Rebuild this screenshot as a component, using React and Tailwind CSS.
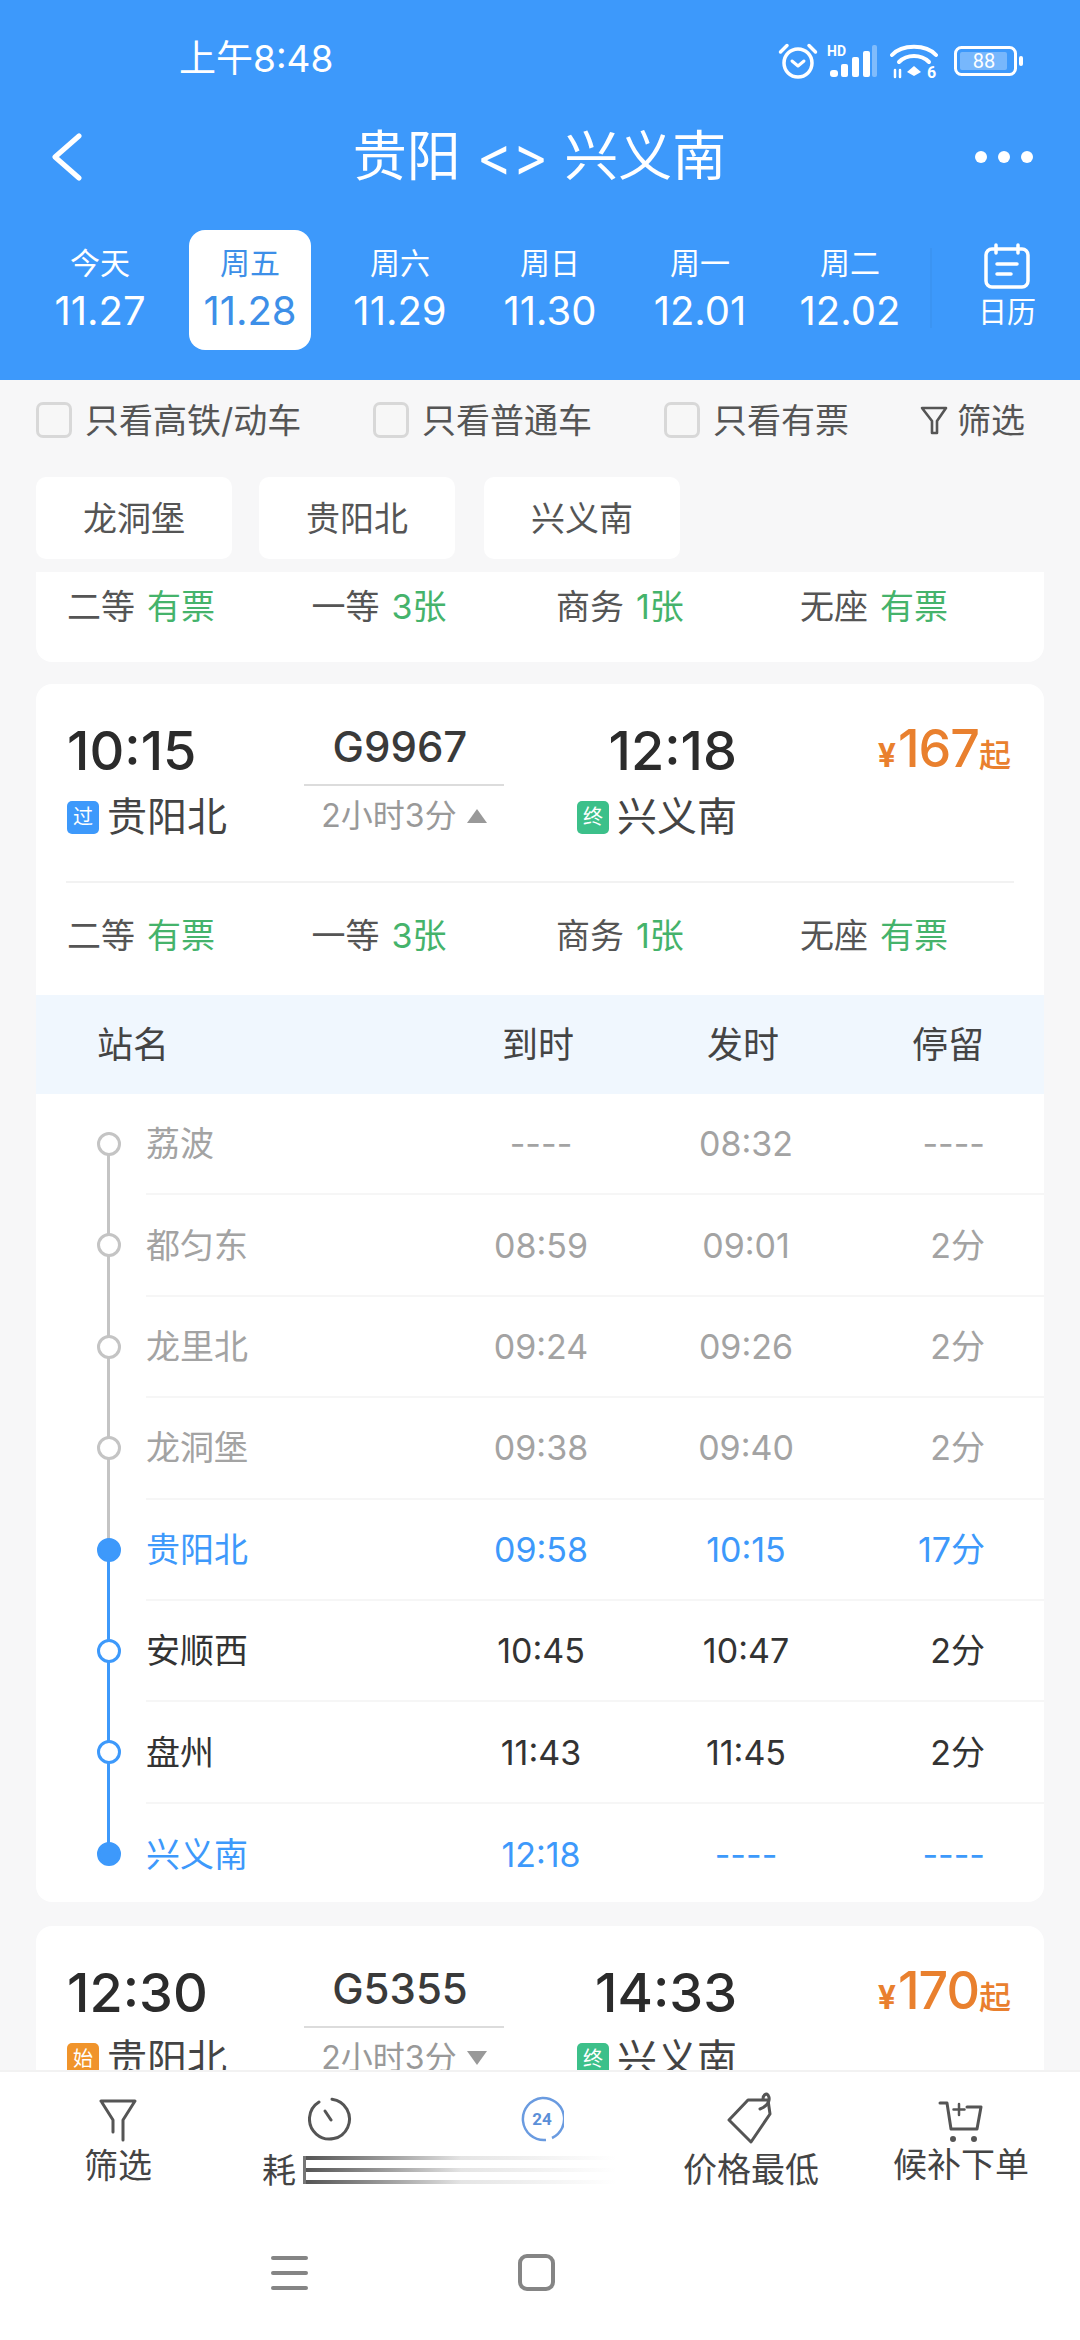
import React from 'react'

const dates = [
  { label: '今天', date: '11.27' },
  { label: '周五', date: '11.28', active: true },
  { label: '周六', date: '11.29' },
  { label: '周日', date: '11.30' },
  { label: '周一', date: '12.01' },
  { label: '周二', date: '12.02' },
]

const stations = [
  { name: '荔波', arrive: '----', leave: '08:32', stop: '----', state: 'past' },
  { name: '都匀东', arrive: '08:59', leave: '09:01', stop: '2分', state: 'past' },
  { name: '龙里北', arrive: '09:24', leave: '09:26', stop: '2分', state: 'past' },
  { name: '龙洞堡', arrive: '09:38', leave: '09:40', stop: '2分', state: 'past' },
  { name: '贵阳北', arrive: '09:58', leave: '10:15', stop: '17分', state: 'start' },
  { name: '安顺西', arrive: '10:45', leave: '10:47', stop: '2分', state: 'mid' },
  { name: '盘州', arrive: '11:43', leave: '11:45', stop: '2分', state: 'mid' },
  { name: '兴义南', arrive: '12:18', leave: '----', stop: '----', state: 'end' },
]

const StatusIcons = () => (
  <div className="flex items-center gap-[9px] text-white mt-[3px]">
    {/* alarm */}
    <svg width="40" height="38" viewBox="0 0 40 38" fill="none" stroke="currentColor" strokeWidth="3.5" strokeLinecap="round" strokeLinejoin="round">
      <circle cx="20" cy="21" r="14" />
      <path d="M14 19l6 5 6-5" strokeWidth="3" />
      <path d="M2.5 10L9 3.5M37.5 10L31 3.5" />
    </svg>
    {/* HD signal */}
    <svg width="50" height="36" viewBox="0 0 50 36" fill="currentColor">
      <text x="0" y="13" fontSize="14" fontWeight="700" fontFamily="Roboto, sans-serif">HD</text>
      <rect x="3" y="27" width="8" height="7" rx="3" />
      <rect x="14" y="21" width="7" height="13" rx="2" />
      <rect x="25" y="14" width="7" height="20" rx="2" />
      <rect x="36" y="8" width="7" height="26" rx="2" />
      <rect x="45" y="2" width="5" height="32" rx="2" opacity="0.35" />
    </svg>
    {/* wifi 6 */}
    <svg width="50" height="38" viewBox="0 0 50 38" fill="none" stroke="currentColor" strokeWidth="4" strokeLinecap="round" className="ml-[4px]">
      <path d="M2 13C12 2 36 2 46 13" />
      <path d="M9 20C17 12 31 12 39 20" />
      <path d="M17 30l7-6 7 6-7 4z" fill="currentColor" stroke="none" />
      <path d="M5 28v7M10 35v-7" strokeWidth="2.5" />
      <text x="37" y="36" fontSize="16" fontWeight="700" fontFamily="Roboto, sans-serif" fill="currentColor" stroke="none">6</text>
    </svg>
    {/* battery */}
    <svg width="70" height="30" viewBox="0 0 70 30" fill="none" className="ml-[5px]">
      <rect x="1.5" y="1.5" width="60" height="27" rx="6" stroke="currentColor" strokeWidth="3" />
      <rect x="6" y="6" width="47" height="18" rx="2" fill="#ffffff" fillOpacity="0.3" />
      <rect x="65" y="10" width="4" height="10" rx="2" fill="currentColor" />
      <text x="30" y="22" textAnchor="middle" fontSize="20" fontFamily="Roboto, sans-serif" fill="currentColor">88</text>
    </svg>
  </div>
)

const Header = () => (
  <header className="h-[380px] shrink-0 bg-[#3d99fb] text-white flex flex-col">
    <div className="h-[116px] pt-[39px] pl-[179px] pr-[56px] flex justify-between items-start">
      <span className="text-[37px] leading-[40px]">上午8:48</span>
      <StatusIcons />
    </div>
    <div className="h-[82px] pl-[50px] pr-[47px] flex items-center justify-between">
      <svg width="34" height="48" viewBox="0 0 34 48" fill="none" stroke="currentColor" strokeWidth="5" strokeLinecap="round" strokeLinejoin="round">
        <path d="M29 3L5 24l24 21" />
      </svg>
      <div className="ml-[20px] text-[54px] leading-[60px] flex gap-[16px]">
        <span>贵阳</span>
        <span>{'<>'}</span>
        <span>兴义南</span>
      </div>
      <div className="flex gap-[11px] w-[58px]">
        <span className="w-[12px] h-[12px] rounded-full bg-white" />
        <span className="w-[12px] h-[12px] rounded-full bg-white" />
        <span className="w-[12px] h-[12px] rounded-full bg-white" />
      </div>
    </div>
    <div className="pl-[25px] pt-[32px] flex">
      {dates.map((d) => (
        <div key={d.date} className="w-[150px] flex justify-center">
          <div className={`w-[122px] h-[120px] rounded-[16px] flex flex-col items-center pt-[14px] ${d.active ? 'bg-white text-[#3d8fe8]' : ''}`}>
            <span className="text-[30px] leading-[38px]">{d.label}</span>
            <span className="text-[40px] leading-[46px] mt-[6px]">{d.date}</span>
          </div>
        </div>
      ))}
      <div className="w-[2px] h-[80px] mt-[18px] ml-[5px] bg-[#3b94f2]" />
      <div className="ml-[46px] flex flex-col items-center pt-[13px]">
        <svg width="48" height="46" viewBox="0 0 48 46" fill="none" stroke="currentColor" strokeWidth="3.5" strokeLinecap="round">
          <rect x="3" y="6" width="42" height="38" rx="6" />
          <path d="M13 2v8M35 2v8M14 21h20M14 31h14" />
        </svg>
        <span className="text-[29px] leading-[36px] mt-[6px]">日历</span>
      </div>
    </div>
  </header>
)

const Checkbox = ({ label, className }) => (
  <div className={`flex items-center gap-[13px] ${className}`}>
    <span className="w-[36px] h-[36px] rounded-[7px] border-[3px] border-[#d8d8d8] bg-[#f7f7f7]" />
    <span>{label}</span>
  </div>
)

const FilterBar = () => (
  <div className="h-[78px] pl-[36px] pt-[2px] flex items-center text-[34px] text-[#555555] shrink-0">
    <Checkbox label="只看高铁/动车" className="w-[337px]" />
    <Checkbox label="只看普通车" className="w-[291px]" />
    <Checkbox label="只看有票" className="w-[256px]" />
    <div className="flex items-center gap-[9px]">
      <svg width="28" height="32" viewBox="0 0 28 32" fill="none" stroke="#555555" strokeWidth="2.6" strokeLinejoin="round">
        <path d="M2 4h24l-9 13v12h-5V17z" />
      </svg>
      <span>筛选</span>
    </div>
  </div>
)

const StationChips = () => (
  <div className="mt-[19px] pl-[36px] flex shrink-0">
    {['龙洞堡', '贵阳北', '兴义南'].map((name, i) => (
      <div key={name} className={`w-[196px] h-[82px] bg-white rounded-[10px] flex items-center justify-center text-[34px] text-[#555555] ${i === 0 ? '' : i === 1 ? 'ml-[27px]' : 'ml-[29px]'}`}>
        {name}
      </div>
    ))}
  </div>
)

const Tickets = () => (
  <div className="pl-[31px] grid grid-cols-[244.5px_244.5px_244px_auto] text-[34px] leading-[48px] text-[#555555]">
    <div>二等<span className="ml-[12px] text-[#45b36b]">有票</span></div>
    <div>一等<span className="ml-[12px] text-[#45b36b]">3张</span></div>
    <div>商务<span className="ml-[12px] text-[#45b36b]">1张</span></div>
    <div>无座<span className="ml-[12px] text-[#45b36b]">有票</span></div>
  </div>
)

const TrainSummary = ({ depart, train, arrive, price, badge, badgeClass, open }) => (
  <div className="flex pt-[35px]">
    <div className="w-[268px] pl-[31px]">
      <div className="text-[54px] leading-[64px] font-medium text-[#2b2b2b]">{depart}</div>
      <div className="mt-[10px] flex items-center gap-[8px] text-[40px] leading-[48px] text-[#444444]">
        <span className={`w-[32px] h-[33px] rounded-[5px] text-white text-[20px] leading-[33px] text-center ${badgeClass}`}>{badge}</span>
        贵阳北
      </div>
    </div>
    <div className="w-[200px] flex flex-col items-center">
      <div className="text-[42px] leading-[56px] font-medium text-[#3a3a3a] -ml-[8px]">{train}</div>
      <div className="mt-[9px] w-full h-[2px] bg-[#dcdcdc]" />
      <div className="mt-[9px] flex items-center gap-[10px] text-[32px] leading-[42px] text-[#999999]">
        2小时3分
        <span className={`w-0 h-0 border-x-[10px] border-x-transparent ${open ? 'border-b-[14px] border-b-[#999999]' : 'border-t-[14px] border-t-[#999999]'}`} />
      </div>
    </div>
    <div className="w-[233px] flex flex-col items-end">
      <div className="text-[54px] leading-[64px] font-medium text-[#2b2b2b]">{arrive}</div>
      <div className="mt-[10px] flex items-center gap-[8px] text-[40px] leading-[48px] text-[#444444]">
        <span className="w-[32px] h-[33px] rounded-[5px] bg-[#3cc08a] text-white text-[20px] leading-[33px] text-center">终</span>
        兴义南
      </div>
    </div>
    <div className="flex-1 pr-[33px] flex items-baseline justify-end text-[#e9802e] font-medium leading-[60px] h-[64px]">
      <span className="text-[32px] font-bold">¥</span>
      <span className="text-[52px] ml-[2px] tracking-[-1px]">{price}</span>
      <span className="text-[32px]">起</span>
    </div>
  </div>
)

const rowText = {
  past: 'text-[#a3a3a3]',
  start: 'text-[#3d99fb]',
  mid: 'text-[#333333]',
  end: 'text-[#3d99fb]',
}

const StationRow = ({ s, index }) => {
  const first = index === 0
  const last = index === stations.length - 1
  const gray = s.state === 'past'
  const solid = s.state === 'start' || s.state === 'end'
  return (
    <div className="flex h-[101.4px]">
      <div className="relative w-[110px] shrink-0">
        {!first && <span className={`absolute left-[71px] top-0 h-1/2 w-[3px] ${gray || s.state === 'start' ? 'bg-[#c4c4c4]' : 'bg-[#3d99fb]'}`} />}
        {!last && <span className={`absolute left-[71px] bottom-0 h-1/2 w-[3px] ${gray ? 'bg-[#c4c4c4]' : 'bg-[#3d99fb]'}`} />}
        <span className={`absolute left-[61px] top-[38px] w-[24px] h-[24px] rounded-full border-[3px] ${gray ? 'border-[#c4c4c4] bg-white' : solid ? 'border-[#3d99fb] bg-[#3d99fb]' : 'border-[#3d99fb] bg-white'}`} />
      </div>
      <div className={`flex-1 flex items-center text-[34px] ${last ? '' : 'border-b-2 border-[#f6f6f6]'} ${rowText[s.state]}`}>
        <span className="w-[280px]">{s.name}</span>
        <span className="w-[230px] text-center">{s.arrive}</span>
        <span className="w-[180px] text-center">{s.leave}</span>
        <span className="w-[149px] text-right">{s.stop}</span>
      </div>
    </div>
  )
}

const StationTable = () => (
  <div>
    <div className="h-[99px] bg-[#f0f7fe] flex items-center text-[36px] text-[#444444]">
      <span className="w-[397px] pl-[61px]">站名</span>
      <span className="w-[210px] text-center">到时</span>
      <span className="w-[200px] text-center">发时</span>
      <span className="w-[201px] pl-[9px] text-center">停留</span>
    </div>
    {stations.map((s, i) => <StationRow key={s.name} s={s} index={i} />)}
  </div>
)

const TrainList = () => (
  <div className="mt-[13px] px-[36px] flex flex-col">
    <div className="h-[90px] pt-[11px] bg-white rounded-b-[16px]">
      <Tickets />
    </div>
    <div className="mt-[22px] h-[1218px] bg-white rounded-[16px] overflow-hidden">
      <TrainSummary depart="10:15" train="G9967" arrive="12:18" price="167" badge="过" badgeClass="bg-[#3d99fb]" open />
      <div className="mt-[40px] mx-[30px] h-[2px] bg-[#f2f2f2]" />
      <div className="mt-[29px] mb-[35px]"><Tickets /></div>
      <StationTable />
    </div>
    <div className="mt-[24px] h-[300px] bg-white rounded-t-[16px]">
      <TrainSummary depart="12:30" train="G5355" arrive="14:33" price="170" badge="始" badgeClass="bg-[#f0942b]" />
    </div>
  </div>
)

const BottomNav = () => (
  <nav className="h-[270px] shrink-0 bg-white border-t-2 border-[#f2f2f2] text-[#444444] text-[34px] flex flex-col">
    <div className="h-[180px] pl-[12px] grid grid-cols-[212px_212px_212px_212px_212px]">
      <div className="flex flex-col items-center pt-[26px]">
        <svg width="38" height="44" viewBox="0 0 38 44" fill="none" stroke="#555555" strokeWidth="3" strokeLinecap="round" strokeLinejoin="round">
          <path d="M2 3h34L24 22v20M14 34V22L2 3" />
        </svg>
        <span className="leading-[40px] mt-[4px]">筛选</span>
      </div>
      <div className="flex flex-col items-center pt-[24px]">
        <svg width="44" height="46" viewBox="0 0 44 46" fill="none" stroke="#555555" strokeWidth="3" strokeLinecap="round">
          <path d="M24 3.2A20 20 0 1 1 11 6" />
          <path d="M17 15l6 9" />
        </svg>
        <div className="self-start ml-[38px] mt-[8px] h-[40px] w-[360px] flex items-center">
          <span className="shrink-0">耗</span>
          <span className="shrink-0 ml-[7px] w-[3px] h-[28px] bg-[#777777]" />
          <div className="shrink-0 flex flex-col gap-[8px] w-[310px]">
            <span className="h-[4px] bg-gradient-to-r from-[#555555] via-[#e4e4e4] to-white" />
            <span className="h-[4px] bg-gradient-to-r from-[#555555] via-[#e4e4e4] to-white" />
            <span className="h-[4px] bg-gradient-to-r from-[#555555] via-[#e4e4e4] to-white" />
          </div>
        </div>
      </div>
      <div className="flex justify-center pt-[24px]">
        <svg width="44" height="46" viewBox="0 0 44 46" fill="none" stroke="#6a9be0" strokeWidth="2.5">
          <path d="M22 2a21 21 0 0 1 10 40" />
          <path d="M22 2a21 21 0 1 0 4 42" />
          <text x="22" y="29" textAnchor="middle" fontSize="17" fontWeight="700" fontFamily="Roboto, sans-serif" fill="#5b8fd8" stroke="none">24</text>
        </svg>
      </div>
      <div className="flex flex-col items-center pt-[20px] -ml-[6px]">
        <svg width="50" height="52" viewBox="0 0 50 52" fill="none" stroke="#555555" strokeWidth="3" strokeLinejoin="round" strokeLinecap="round">
          <path d="M22 8h20l2 14-19 28L3 28z" />
          <path d="M34 17c8-3 11-9 8-14-2-2-5 0-5 4" />
        </svg>
        <span className="leading-[40px] mt-[6px]">价格最低</span>
      </div>
      <div className="flex flex-col items-center pt-[29px] -ml-[10px]">
        <svg width="46" height="42" viewBox="0 0 46 42" fill="none" stroke="#555555" strokeWidth="3" strokeLinecap="round" strokeLinejoin="round">
          <path d="M2 2h7l4 26h26l4-22H29" />
          <path d="M21 3v11M15.5 8.5h11" strokeWidth="2.5" />
          <circle cx="15" cy="38" r="1.5" fill="#555555" />
          <circle cx="36" cy="38" r="1.5" fill="#555555" />
        </svg>
        <span className="leading-[40px] mt-[2px]">候补下单</span>
      </div>
    </div>
    {/* system navigation keys */}
    <div className="pl-[271px] pt-[2px] flex items-center">
      <div className="w-[37px] flex flex-col gap-[11px]">
        <span className="h-[4px] bg-[#858585] rounded-full" />
        <span className="h-[4px] bg-[#858585] rounded-full" />
        <span className="h-[4px] bg-[#858585] rounded-full" />
      </div>
      <div className="ml-[210px] w-[37px] h-[37px] border-[4px] border-[#858585] rounded-[9px]" />
    </div>
  </nav>
)

export default function App() {
  return (
    <div className="w-[1080px] h-[2340px] flex flex-col overflow-hidden bg-[#f7f7f8] font-['Inter','Noto_Sans_CJK_SC',sans-serif]">
      <Header />
      <main className="flex-1 min-h-0 overflow-hidden">
        <FilterBar />
        <StationChips />
        <TrainList />
      </main>
      <BottomNav />
    </div>
  )
}
